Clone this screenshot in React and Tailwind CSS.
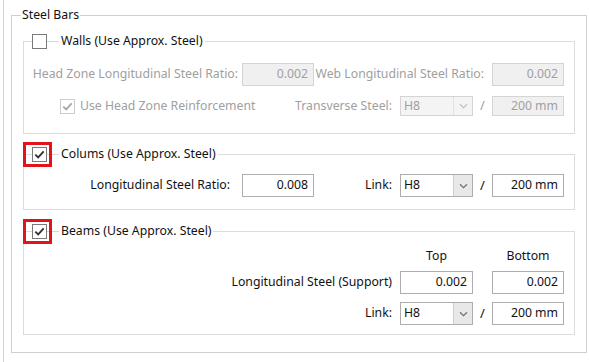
import React from "react";

const FONT = { fontFamily: '"Noto Sans", "Open Sans", sans-serif' };

function Check({ checked, disabled }) {
  return (
    <span
      className={
        "flex h-[15px] w-[15px] shrink-0 items-center justify-center border bg-white " +
        (disabled ? "border-[#cccccc]" : "border-[#7a7a7a]")
      }
    >
      {checked && (
        <svg width="11" height="11" viewBox="0 0 11 11">
          <path
            d="M1.3 5.6 L4.2 8.4 L9.7 2.4"
            fill="none"
            stroke={disabled ? "#a8a8a8" : "#333333"}
            strokeWidth="1.9"
          />
        </svg>
      )}
    </span>
  );
}

function Field({ value, disabled, w = "w-[72px]", h = "h-[23px]" }) {
  return (
    <div
      className={
        "flex items-center justify-end border pr-[5px] text-[12.25px] " +
        w +
        " " +
        h +
        " " +
        (disabled
          ? "border-[#d4d4d4] bg-[#f0f0f0] text-[#a0a0a0]"
          : "border-[#adadad] bg-white text-[#111]")
      }
    >
      {value}
    </div>
  );
}

function Select({ value, disabled, h = "h-[23px]" }) {
  return (
    <div
      className={
        "flex w-[73px] items-stretch border text-[12.25px] " +
        h +
        " " +
        (disabled
          ? "border-[#d4d4d4] bg-[#f4f4f4] text-[#a0a0a0]"
          : "border-[#adadad] bg-white text-[#111]")
      }
    >
      <span className="flex flex-1 items-center pl-[3px]">{value}</span>
      <span
        className={
          "flex w-[19px] items-center justify-center border-l " +
          (disabled ? "border-[#e0e0e0] bg-[#f4f4f4]" : "border-[#d0d0d0] bg-[#e8e8e8]")
        }
      >
        <svg width="9" height="6" viewBox="0 0 9 6">
          <path
            d="M1 1.2 L4.5 4.6 L8 1.2"
            fill="none"
            stroke={disabled ? "#c0c0c0" : "#707070"}
            strokeWidth="1.2"
          />
        </svg>
      </span>
    </div>
  );
}

function Cluster({ sel, val, disabled, h }) {
  return (
    <div className="flex items-center">
      <Select value={sel} disabled={disabled} h={h} />
      <span
        className={
          "flex w-[19px] justify-center text-[13px] " +
          (disabled ? "text-[#a0a0a0]" : "text-[#111]")
        }
      >
        /
      </span>
      <Field value={val} disabled={disabled} h={h} />
    </div>
  );
}

function GroupLegend({ checked, highlight, label }) {
  return (
    <legend className="ml-[8px] flex h-[16px] items-center pl-[0px] pr-[2px]">
      <span className="relative flex">
        <Check checked={checked} />
        {highlight && (
          <span className="absolute left-[-9px] top-[-5px] h-[25px] w-[29px] border-[3px] border-[#e3131b]" />
        )}
      </span>
      <span className="h-px w-[12px] bg-[#d8d8d8]" />
      <span className="pl-[2px] text-[12.25px] leading-[16px] text-[#111]">{label}</span>
    </legend>
  );
}

export default function App() {
  return (
    <div className="h-[362px] w-[589px] bg-white" style={FONT}>
      <div className="ml-[3px] h-[362px] border-l border-[#d4d4d4] pt-[7px]">
        <fieldset className="ml-[7px] w-[576px] border border-[#d0d0d0] pb-[17px]">
          <legend className="ml-[9px] px-[1px] text-[12.25px] leading-[16px] text-[#111]">
            Steel Bars
          </legend>

          {/* Walls */}
          <fieldset className="ml-[11px] mt-[10px] w-[552px] border border-[#dcdcdc] pb-[17px]">
            <GroupLegend checked={false} label="Walls (Use Approx. Steel)" />
            <div className="mt-[14px] flex items-center text-[12.25px] text-[#a0a0a0]">
              <span className="w-[214px] text-right">Head Zone Longitudinal Steel Ratio:</span>
              <span className="ml-[4px]">
                <Field value="0.002" disabled />
              </span>
              <span className="w-[170px] text-right">Web Longitudinal Steel Ratio:</span>
              <span className="ml-[8px]">
                <Field value="0.002" disabled />
              </span>
            </div>
            <div className="mt-[10px] flex items-center text-[12.25px] text-[#a0a0a0]">
              <span className="ml-[36px]">
                <Check checked disabled />
              </span>
              <span className="ml-[5px]">Use Head Zone Reinforcement</span>
              <span className="ml-auto mr-[8px]">Transverse Steel:</span>
              <span className="mr-[10px]">
                <Cluster sel="H8" val="200 mm" disabled h="h-[20px]" />
              </span>
            </div>
          </fieldset>

          {/* Colums */}
          <fieldset className="ml-[11px] mt-[12px] w-[552px] border border-[#dcdcdc] pb-[12px]">
            <GroupLegend checked highlight label="Colums (Use Approx. Steel)" />
            <div className="mt-[12px] flex items-center text-[12.25px] text-[#111]">
              <span className="w-[206px] text-right">Longitudinal Steel Ratio:</span>
              <span className="ml-[12px]">
                <Field value="0.008" />
              </span>
              <span className="ml-auto mr-[8px]">Link:</span>
              <span className="mr-[10px]">
                <Cluster sel="H8" val="200 mm" />
              </span>
            </div>
          </fieldset>

          {/* Beams */}
          <fieldset className="ml-[11px] mt-[13px] w-[552px] border border-[#dcdcdc] pb-[9px]">
            <GroupLegend checked highlight label="Beams (Use Approx. Steel)" />
            <div className="mt-[9px] flex text-[12.25px] leading-[16px] text-[#111]">
              <span className="ml-auto w-[73px] text-center">Top</span>
              <span className="w-[19px]" />
              <span className="mr-[10px] w-[72px] text-center">Bottom</span>
            </div>
            <div className="mt-[7px] flex items-center text-[12.25px] text-[#111]">
              <span className="ml-auto mr-[8px]">Longitudinal Steel (Support)</span>
              <span className="mr-[10px] flex items-center">
                <Field value="0.002" w="w-[73px]" />
                <span className="w-[19px]" />
                <Field value="0.002" />
              </span>
            </div>
            <div className="mt-[8px] flex items-center text-[12.25px] text-[#111]">
              <span className="ml-auto mr-[8px]">Link:</span>
              <span className="mr-[10px]">
                <Cluster sel="H8" val="200 mm" />
              </span>
            </div>
          </fieldset>
        </fieldset>
      </div>
    </div>
  );
}
